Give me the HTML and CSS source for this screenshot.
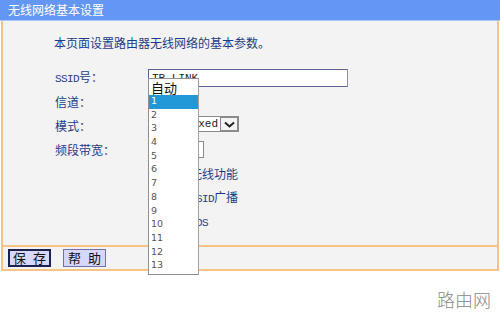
FILE: index.html
```html
<!DOCTYPE html>
<html lang="zh-CN">
<head>
<meta charset="utf-8">
<title>无线网络基本设置</title>
<link rel="stylesheet" href="styles.css">
</head>
<body>
<div class="panel">
  <div class="title">无线网络基本设置</div>
  <div class="content">
    <p class="intro">本页面设置路由器无线网络的基本参数。</p>
    <div class="form">
      <div class="label"><span class="en">SSID</span>号：</div>
      <div class="ctl"><div class="input">TP-LINK</div></div>

      <div class="label">信道：</div>
      <div class="ctl"><div class="sel sel-ch">1</div></div>

      <div class="label">模式：</div>
      <div class="ctl"><div class="sel sel-mode"><span class="seltext">11bgn mixed</span><span class="arrow"><svg width="11" height="7" viewBox="0 0 11 7"><path d="M1 1.5 L5.5 5.5 L10 1.5" fill="none" stroke="#222" stroke-width="2"/></svg></span></div></div>

      <div class="label">频段带宽：</div>
      <div class="ctl"><div class="sel sel-bw">自动</div></div>

      <div class="label"></div>
      <div class="ctl"><span class="cb"></span><span class="cbtext">开启无线功能</span></div>

      <div class="label"></div>
      <div class="ctl"><span class="cb"></span><span class="cbtext">开启<span class="en">SSID</span>广播</span></div>

      <div class="label"></div>
      <div class="ctl"><span class="cb"></span><span class="cbtext">开启<span class="en">WDS</span></span></div>
    </div>
  </div>
  <div class="btnbar">
    <button class="btn btn-primary">保 存</button>
    <button class="btn">帮 助</button>
  </div>
  <ul class="droplist">
    <li class="auto">自动</li>
    <li class="hl">1</li>
    <li>2</li>
    <li>3</li>
    <li>4</li>
    <li>5</li>
    <li>6</li>
    <li>7</li>
    <li>8</li>
    <li>9</li>
    <li>10</li>
    <li>11</li>
    <li>12</li>
    <li>13</li>
  </ul>
</div>
<div class="watermark">路由网</div>
</body>
</html>
```
FILE: styles.css
```css
* { box-sizing: border-box; }
html, body {
  margin: 0;
  padding: 0;
  background: #ffffff;
  width: 500px;
  height: 313px;
  overflow: hidden;
  font-family: "Noto Sans CJK SC", "DejaVu Sans", sans-serif;
}
.panel {
  position: relative;
  width: 500px;
}
.title {
  height: 21px;
  background: #6497f5;
  border-bottom: 1px solid #a9c5fa;
  color: #ffffff;
  font-size: 12px;
  line-height: 20px;
  padding-left: 8px;
}
.content {
  margin-left: 1px;
  margin-right: 1px;
  height: 224px;
  background: #f3f3f3;
  border-left: 2px solid #f7c487;
  border-right: 2px solid #f7c487;
  padding-top: 14px;
}
.intro {
  margin: 0 0 15px 51px;
  font-size: 12px;
  line-height: 16px;
  color: #1f3b86;
}
.form {
  margin-left: 52px;
  display: grid;
  grid-template-columns: 93px 1fr;
  grid-auto-rows: 24px;
  align-items: center;
}
.label {
  font-size: 12px;
  color: #1f3b86;
  line-height: 14px;
}
.en {
  font-family: "Liberation Mono", monospace;
  font-size: 11px;
  letter-spacing: -0.6px;
}
.ctl {
  display: flex;
  align-items: center;
  height: 24px;
}
.input {
  width: 200px;
  height: 18px;
  background: #ffffff;
  border: 1px solid #5d6496;
  border-right-color: #8e8e9c;
  font-family: "Liberation Mono", monospace;
  font-size: 11px;
  line-height: 16px;
  padding-left: 3px;
  color: #222;
}
.sel {
  height: 17px;
  background: #ffffff;
  border: 1px solid #8a8a8a;
  font-size: 11px;
  line-height: 15px;
  padding-left: 2px;
  color: #222;
}
.sel-ch { width: 50px; }
.sel-mode {
  width: 91px;
  height: 16px;
  display: flex;
  justify-content: flex-end;
  padding-left: 0;
  margin-top: -4px;
  overflow: hidden;
}
.seltext {
  flex-shrink: 0;
  font-family: "Liberation Mono", monospace;
  font-size: 11px;
  line-height: 14px;
  white-space: nowrap;
  margin-right: 2px;
}
.arrow {
  flex-shrink: 0;
  width: 18px;
  height: 14px;
  border: 1px solid #8a8a8a;
  background: #f4f4f4;
  display: flex;
  align-items: center;
  justify-content: center;
}
.sel-bw { width: 56px; margin-top: -2px; }
.cb {
  width: 13px;
  height: 13px;
  border: 1px solid #777;
  background: #fff;
  margin-left: 2px;
  margin-right: 3px;
}
.cbtext {
  font-size: 12px;
  color: #1f3b86;
  line-height: 14px;
}
.btnbar {
  margin-left: 1px;
  margin-right: 1px;
  height: 26px;
  background: #f3f3f3;
  border: 2px solid #f7c487;
  display: flex;
  align-items: center;
  gap: 12px;
  padding-left: 5px;
}
.btn {
  margin: 0;
  height: 18px;
  width: 43px;
  padding: 0;
  background: #d5d7fb;
  border: 1px solid #6f72a8;
  font-family: "Noto Sans CJK SC", sans-serif;
  font-size: 13px;
  line-height: 14px;
  letter-spacing: 2px;
  text-indent: 2px;
  color: #111;
}
.btn-primary {
  border: 2px solid #1d2150;
}
.droplist {
  position: absolute;
  left: 148px;
  top: 78px;
  width: 51px;
  margin: 0;
  padding: 0 0 1px 0;
  list-style: none;
  background: #ffffff;
  border: 1px solid #8f8f8f;
  border-right-color: #a0a0a0;
}
.droplist li {
  height: 13.7px;
  line-height: 11px;
  padding-left: 2px;
  font-family: "DejaVu Sans", sans-serif;
  font-size: 9.5px;
  color: #555;
}
.droplist li.auto {
  height: 16px;
  line-height: 17px;
  font-family: "Noto Sans CJK SC", sans-serif;
  font-size: 13px;
  color: #111;
}
.droplist li.hl {
  background: #2199d9;
  color: #ffffff;
  line-height: 12px;
}
.watermark {
  position: absolute;
  left: 437px;
  top: 286px;
  font-family: "Noto Sans CJK SC", sans-serif;
  font-size: 18px;
  font-weight: 300;
  color: #8a8a8a;
}
```
